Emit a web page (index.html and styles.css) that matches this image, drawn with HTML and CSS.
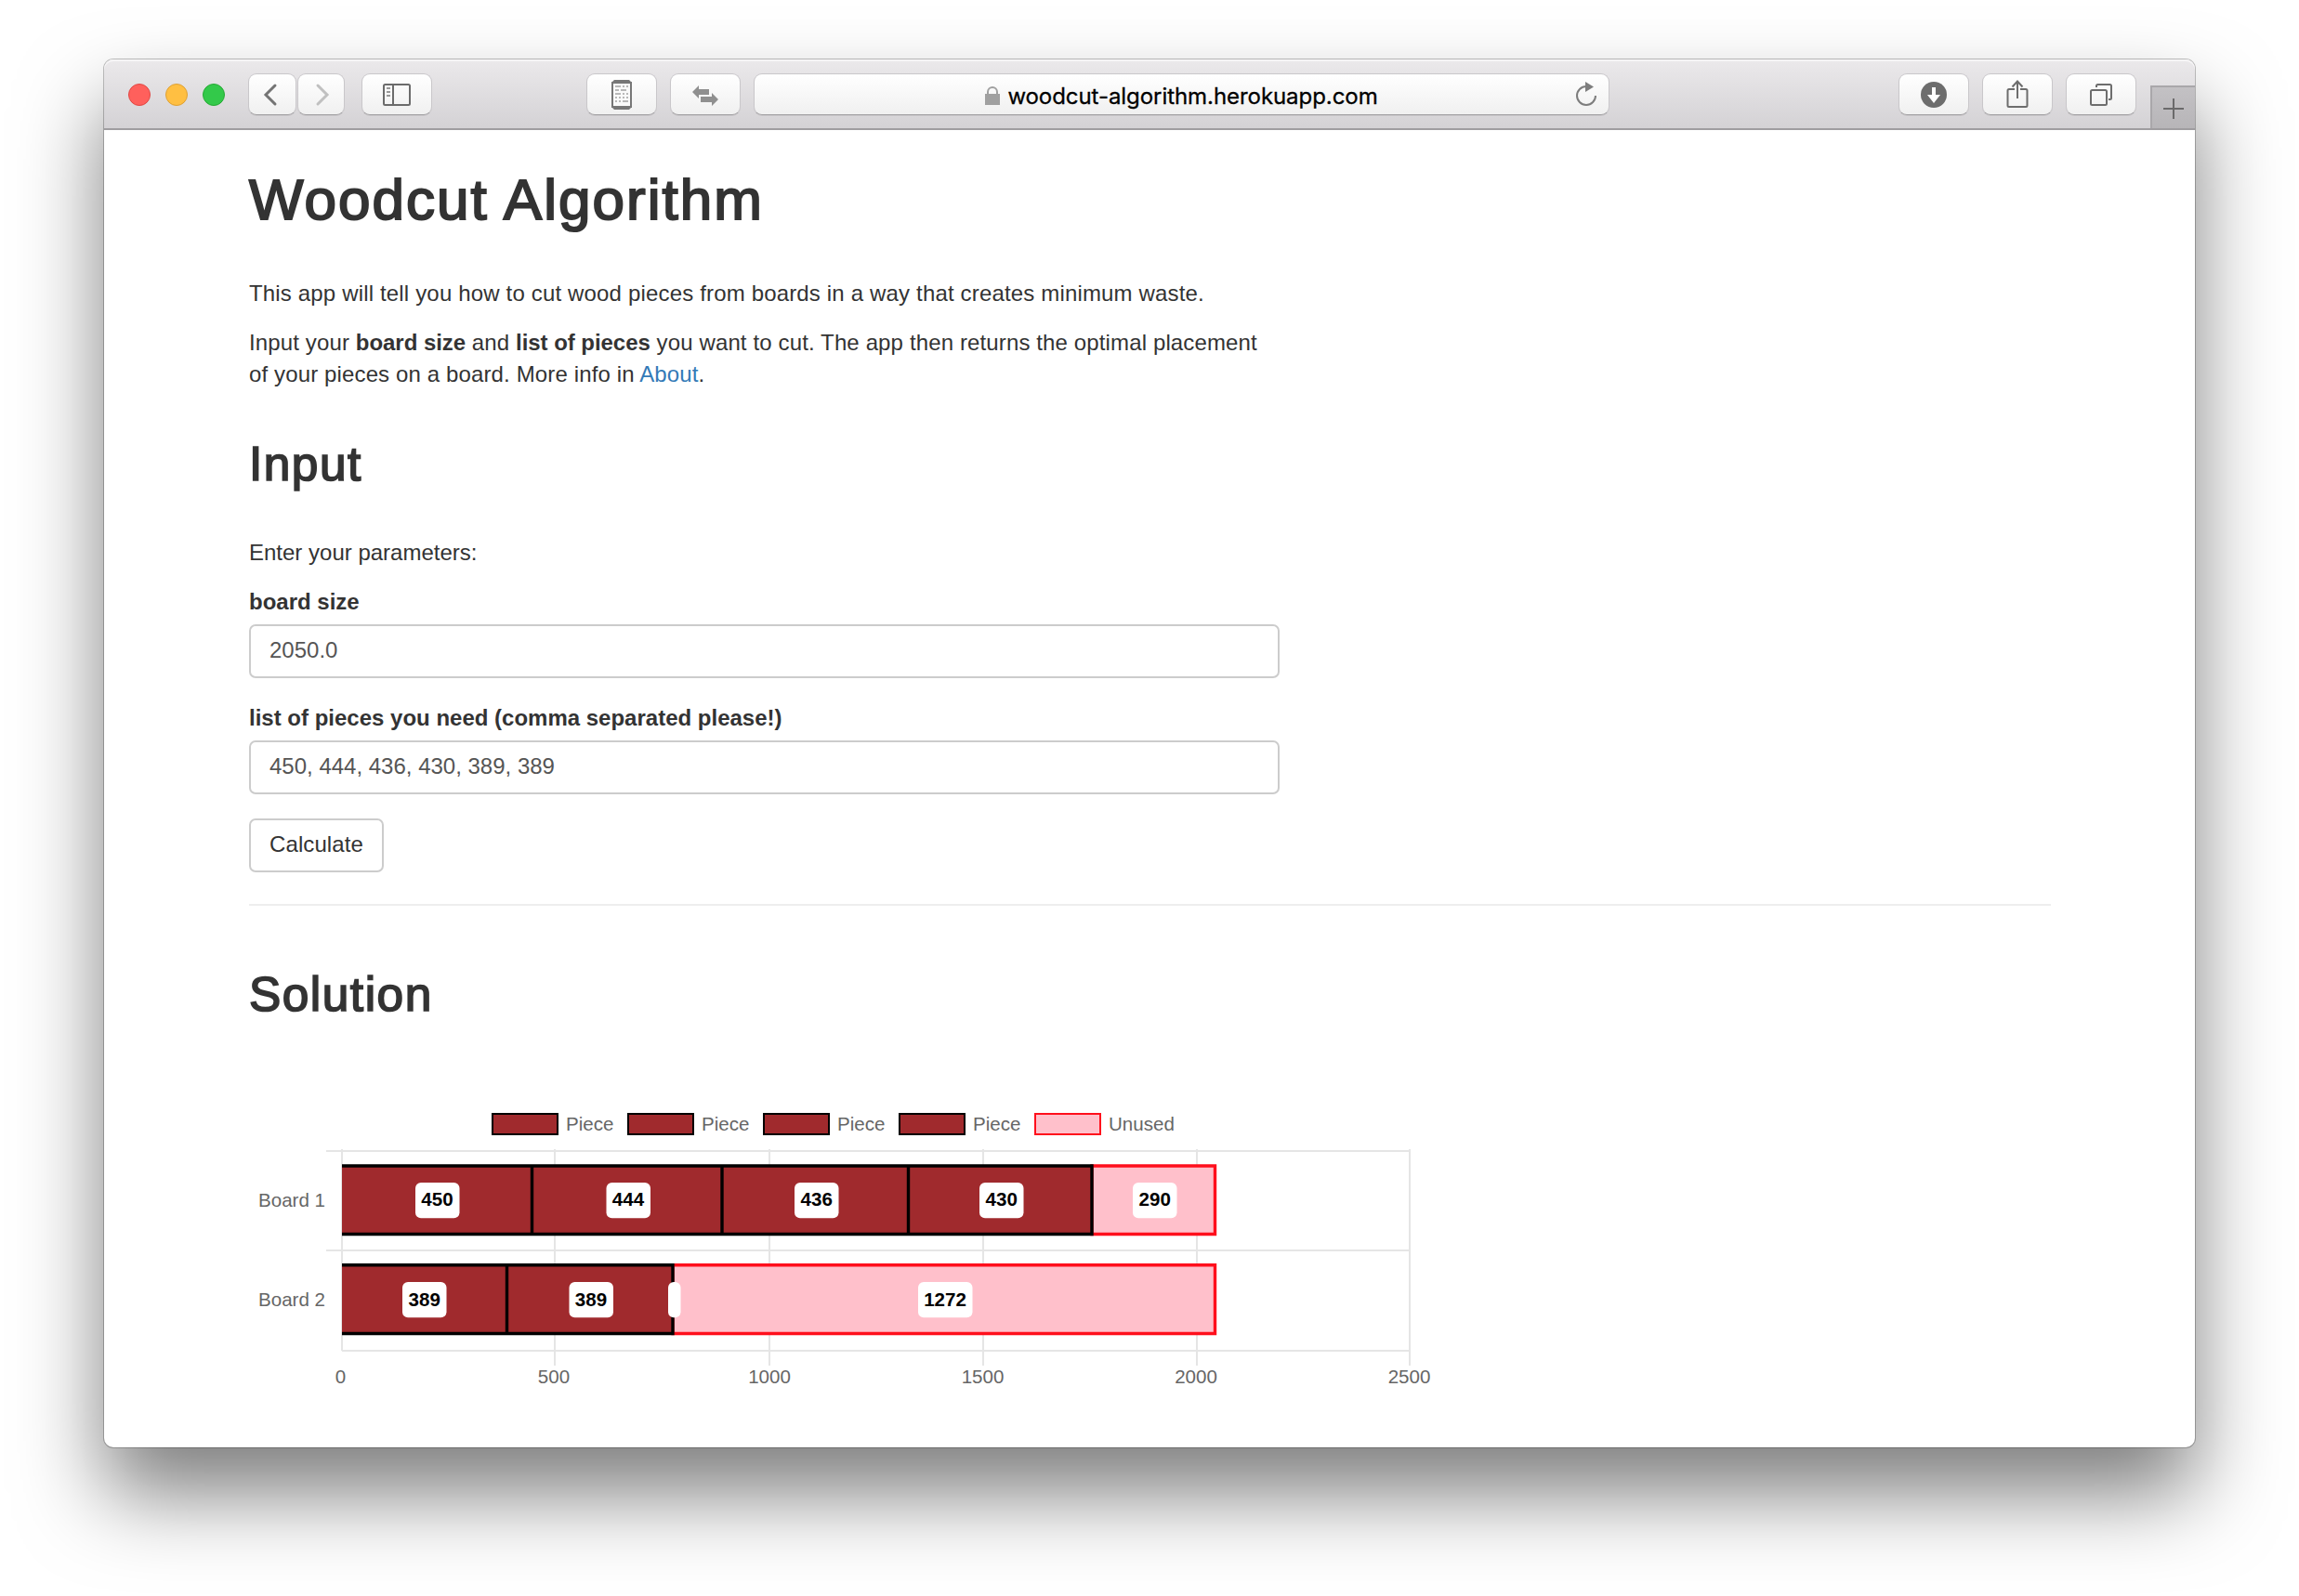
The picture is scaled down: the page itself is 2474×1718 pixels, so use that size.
FILE: index.html
```html
<!DOCTYPE html>
<html lang="en">
<head>
<meta charset="utf-8">
<title>Woodcut Algorithm</title>
<link rel="stylesheet" href="styles.css">
</head>
<body>
<div class="window">
  <header class="toolbar">
    <div class="lights"><i class="light red"></i><i class="light yellow"></i><i class="light green"></i></div>
    <div class="nav">
      <button class="btn back"><svg width="16" height="26" viewBox="0 0 16 26"><path d="M13 3 3 13l10 10" fill="none" stroke="#747474" stroke-width="3" stroke-linecap="round"/></svg></button>
      <button class="btn forward"><svg width="16" height="26" viewBox="0 0 16 26"><path d="M3 3l10 10L3 23" fill="none" stroke="#c0c0c0" stroke-width="3" stroke-linecap="round"/></svg></button>
    </div>
    <button class="btn wide sidebar"><svg width="30" height="24" viewBox="0 0 30 24"><rect x="1" y="1" width="28" height="22" rx="1.5" fill="none" stroke="#6b6b6b" stroke-width="2"/><path d="M11 1v22" stroke="#6b6b6b" stroke-width="2"/><path d="M4 5h4M4 9h4M4 13h4" stroke="#999" stroke-width="2"/></svg></button>
    <button class="btn wide device"><svg width="22" height="32" viewBox="0 0 22 32"><path d="M1 3h20v26H1z" fill="#fafafa" stroke="#777" stroke-width="2"/><path d="M3 0h16l2 2v2H1V2zM1 28h20v2l-2 2H3l-2-2z" fill="#777"/><path d="M4 7h6m2 0h2m2 0h2M4 11h4m2 0h6M4 15h6m2 0h2m2 0h2M4 19h2m2 0h2m2 0h2m2 0h2M4 23h2m2 0h2m2 0h6" stroke="#b8b8b8" stroke-width="2"/></svg></button>
    <button class="btn wide swap"><svg width="28" height="24" viewBox="0 0 28 24"><path d="M0 9 7 2v4h11v6H7v4zM28 17l-7-7v4H9v6h12v4z" fill="#8f8f8f"/></svg></button>
    <div class="address">
      <svg class="lock" width="16" height="20" viewBox="0 0 16 20"><path d="M3 9V6a5 5 0 0 1 10 0v3" fill="none" stroke="#a0a0a0" stroke-width="2"/><path d="M0 8h16v12H0z" fill="#a0a0a0"/></svg>
      <span class="host">woodcut-algorithm.herokuapp.com</span>
      <svg class="reload" width="24" height="28" viewBox="0 0 24 28"><path d="M21 15a10 10 0 1 1-10-10" fill="none" stroke="#7d7d7d" stroke-width="2"/><path d="M10 0l9 5.500-9 5.500z" fill="#7d7d7d"/></svg>
    </div>
    <button class="btn wide"><svg width="28" height="28" viewBox="0 0 28 28"><circle cx="14" cy="14" r="14" fill="#6d6d6d"/><path d="M12 6h4v8h5l-7 9-7-9h5z" fill="#fff"/></svg></button>
    <button class="btn wide share"><svg width="24" height="30" viewBox="0 0 24 30"><path d="M9 10H3a1.500 1.500 0 0 0-1.500 1.500v16A1.500 1.500 0 0 0 3 29h18a1.500 1.500 0 0 0 1.500-1.500v-16A1.500 1.500 0 0 0 21 10h-6M12 20V1.500M6.500 7.500 12 1.500l5.500 6" fill="none" stroke="#6d6d6d" stroke-width="2"/></svg></button>
    <button class="btn wide tabs"><svg width="24" height="24" viewBox="0 0 24 24"><rect x="1" y="7" width="17" height="16" rx="1.500" fill="none" stroke="#6d6d6d" stroke-width="2"/><path d="M7 4V2.500A1.500 1.500 0 0 1 8.500 1h13A1.500 1.500 0 0 1 23 2.500V15.500A1.500 1.500 0 0 1 21.500 17H20" fill="none" stroke="#6d6d6d" stroke-width="2"/></svg></button>
    <button class="newtab"><svg width="22" height="22" viewBox="0 0 22 22"><path d="M11 0v22M0 11h22" stroke="#6b6a6b" stroke-width="2"/></svg></button>
  </header>
  <main class="page">
    <h1 class="title">Woodcut Algorithm</h1>
    <p class="text intro">This app will tell you how to cut wood pieces from boards in a way that creates minimum waste.</p>
    <p class="text details">Input your <b>board size</b> and <b>list of pieces</b> you want to cut. The app then returns the optimal placement<br>of your pieces on a board. More info in <a class="link" href="#">About</a>.</p>
    <h2 class="heading">Input</h2>
    <form class="form">
      <p class="text">Enter your parameters:</p>
      <label class="label" for="size">board size</label>
      <input class="field" id="size" value="2050.0">
      <label class="label" for="pieces">list of pieces you need (comma separated please!)</label>
      <input class="field" id="pieces" value="450, 444, 436, 430, 389, 389">
      <button class="submit" type="button">Calculate</button>
    </form>
    <hr class="rule">
    <h2 class="heading solution">Solution</h2>
    <svg class="chart" width="1290" height="320" viewBox="268 1190 1290 320">
      <g class="key piece"><rect x="530" y="1199" width="70" height="22"/><rect x="676" y="1199" width="70" height="22"/><rect x="822" y="1199" width="70" height="22"/><rect x="968" y="1199" width="70" height="22"/></g>
      <g class="key unused"><rect x="1114" y="1199" width="70" height="22"/></g>
      <g class="caption"><text x="609" y="1217">Piece</text><text x="755" y="1217">Piece</text><text x="901" y="1217">Piece</text><text x="1047" y="1217">Piece</text><text x="1193" y="1217">Unused</text></g>
      <path class="grid" d="M368 1237V1454M597 1237V1470M828 1237V1470M1058 1237V1470M1288 1237V1470M1517 1237V1470M351 1239H1517M351 1346H1517M368 1454H1517"/>
      <g class="unused bar"><path d="M1175 1255H1307.500V1328.500H1175z"/><path d="M724 1361.700H1307.500V1435.500H724z"/></g>
      <g class="piece bar"><path class="fill" d="M368 1255H1175V1328.500H368zM368 1361.700H724V1435.500H368z"/><path class="edge" d="M368 1255H1175V1328.500H368M572.500 1255V1328.500M777 1255V1328.500M977.500 1255V1328.500M368 1361.700H724V1435.500H368M545.500 1361.700V1435.500"/></g>
      <g class="tag"><rect x="447" y="1273" width="47.500" height="38.300" rx="6"/><rect x="652.500" y="1273" width="47.500" height="38.300" rx="6"/><rect x="855" y="1273" width="47.500" height="38.300" rx="6"/><rect x="1054" y="1273" width="47.500" height="38.300" rx="6"/><rect x="1219" y="1273" width="47.500" height="38.300" rx="6"/><rect x="433" y="1380" width="47.500" height="38.300" rx="6"/><rect x="612.500" y="1380" width="47.500" height="38.300" rx="6"/><rect x="719" y="1380" width="13.500" height="38.300" rx="6"/><rect x="988" y="1380" width="58.500" height="38.300" rx="6"/></g>
      <g class="value"><text x="470.500" y="1298">450</text><text x="676" y="1298">444</text><text x="878.700" y="1298">436</text><text x="1077.700" y="1298">430</text><text x="1242.700" y="1298">290</text><text x="456.700" y="1405.700">389</text><text x="636" y="1405.700">389</text><text x="1017" y="1405.700">1272</text></g>
      <g class="caption"><text x="278" y="1298.500">Board 1</text><text x="278" y="1405.700">Board 2</text></g>
      <g class="caption tick"><text x="366.500" y="1488.700">0</text><text x="596" y="1488.700">500</text><text x="828" y="1488.700">1000</text><text x="1057.500" y="1488.700">1500</text><text x="1287" y="1488.700">2000</text><text x="1516.500" y="1488.700">2500</text></g>
    </svg>
  </main>
</div>
</body>
</html>
```
FILE: styles.css
```css
* { box-sizing: border-box; }
body {
  margin: 0;
  width: 2474px;
  height: 1718px;
  padding: 64px 112px 160px;
  overflow: hidden;
  background: #fff;
  color: #333;
  font: 24px/34px "Liberation Sans", Arial, sans-serif;
}
svg { display: block; }
.window {
  height: 1494px;
  border-radius: 10px;
  background: #fff;
  box-shadow: 0 0 0 1px rgba(0,0,0,.24), 0 50px 90px rgba(0,0,0,.51);
}
.toolbar {
  display: flex;
  align-items: flex-start;
  height: 76px;
  padding: 15px 0 0 26px;
  border-bottom: 2px solid #9f9da0;
  border-radius: 10px 10px 0 0;
  background: linear-gradient(#ebe9eb, #d4d2d5);
  box-shadow: inset 0 2px 0 #f6f5f6;
}
.lights { display: flex; gap: 16px; padding-top: 11px; margin-right: 25px; }
.light { width: 24px; height: 24px; border-radius: 50%; border: 1px solid; }
.red { background: #ff605c; border-color: #e04844; }
.yellow { background: #ffbf42; border-color: #dea034; }
.green { background: #33c94a; border-color: #26a934; }
.nav { display: flex; gap: 1px; margin-right: 18px; }
.btn, .address {
  display: flex;
  align-items: center;
  justify-content: center;
  flex: none;
  width: 52px;
  height: 45px;
  padding: 0;
  border: 1px solid #c9c7ca;
  border-bottom-color: #a09ea1;
  border-radius: 9px;
  background: linear-gradient(#fff, #f0f0f0);
  box-shadow: 0 1px 0 rgba(0,0,0,.06);
}
.back { padding-right: 5px; }
.forward { width: 51px; padding-left: 2px; }
.wide { width: 76px; margin-right: 14px; }
.sidebar { margin-right: 166px; }
.address { width: 921px; margin-right: 311px; padding-top: 2px; position: relative; color: #000; font: 24px/30px Inter, sans-serif; gap: 8px; }
.host { padding-top: 2px; -webkit-text-stroke: .3px #000; letter-spacing: -.06px; }
.reload { position: absolute; right: 11px; top: 8px; }
.share { padding-bottom: 1px; }
.newtab {
  display: flex;
  align-items: center;
  justify-content: center;
  width: 48px;
  height: 46px;
  margin: 13px 0 0 1px;
  padding: 2px 0 0;
  border: 0;
  border-left: 2px solid #a9a7aa;
  border-top: 2px solid #a9a7aa;
  background: linear-gradient(#c3c1c4, #b7b5b8);
}
.page { padding: 41px 155px 0 156px; }
.title { margin: 0 0 50px; font-size: 62px; line-height: 68px; font-weight: 400; letter-spacing: 2.050px; -webkit-text-stroke: 2px #333; }
.heading { margin: 51px 0; font-size: 51.400px; line-height: 56px; font-weight: 400; letter-spacing: 1.500px; -webkit-text-stroke: 1.700px #333; }
.text { margin: 0 0 19px; }
.intro { letter-spacing: .165px; }
.details { letter-spacing: .130px; }
.details b { letter-spacing: -.05px; }
.link { color: #337ab7; text-decoration: none; }
.form { width: 1109px; }
.label { display: block; margin-bottom: 7px; font-weight: 700; }
.field {
  display: block;
  width: 100%;
  height: 58px;
  margin: 0 0 26px;
  padding: 0 20px 3px;
  border: 2px solid #ccc;
  border-radius: 7px;
  color: #555;
  font: inherit;
}
.submit {
  display: block;
  height: 58px;
  margin-top: 26px;
  padding: 0 20px 3px;
  border: 2px solid #ccc;
  border-radius: 7px;
  background: #fff;
  color: #333;
  font: inherit;
  letter-spacing: .1px;
}
.rule { height: 2px; margin: 34px 0 0; border: 0; background: #eee; }
.solution { margin: 67px 0 92px; }
.caption { fill: #666; font-size: 20.570px; }
.value { fill: #000; font-size: 20.570px; font-weight: 700; text-anchor: middle; }
.tick { text-anchor: middle; }
.tag { fill: #fff; }
.key { stroke-width: 2; }
.piece { fill: #a02a2d; stroke: #000; }
.unused { fill: #ffc0cb; stroke: #ff0f1c; }
.bar { stroke-width: 3.400; }
.fill { stroke: none; }
.edge { fill: none; }
.grid { stroke: #e5e5e5; stroke-width: 2; }
```
